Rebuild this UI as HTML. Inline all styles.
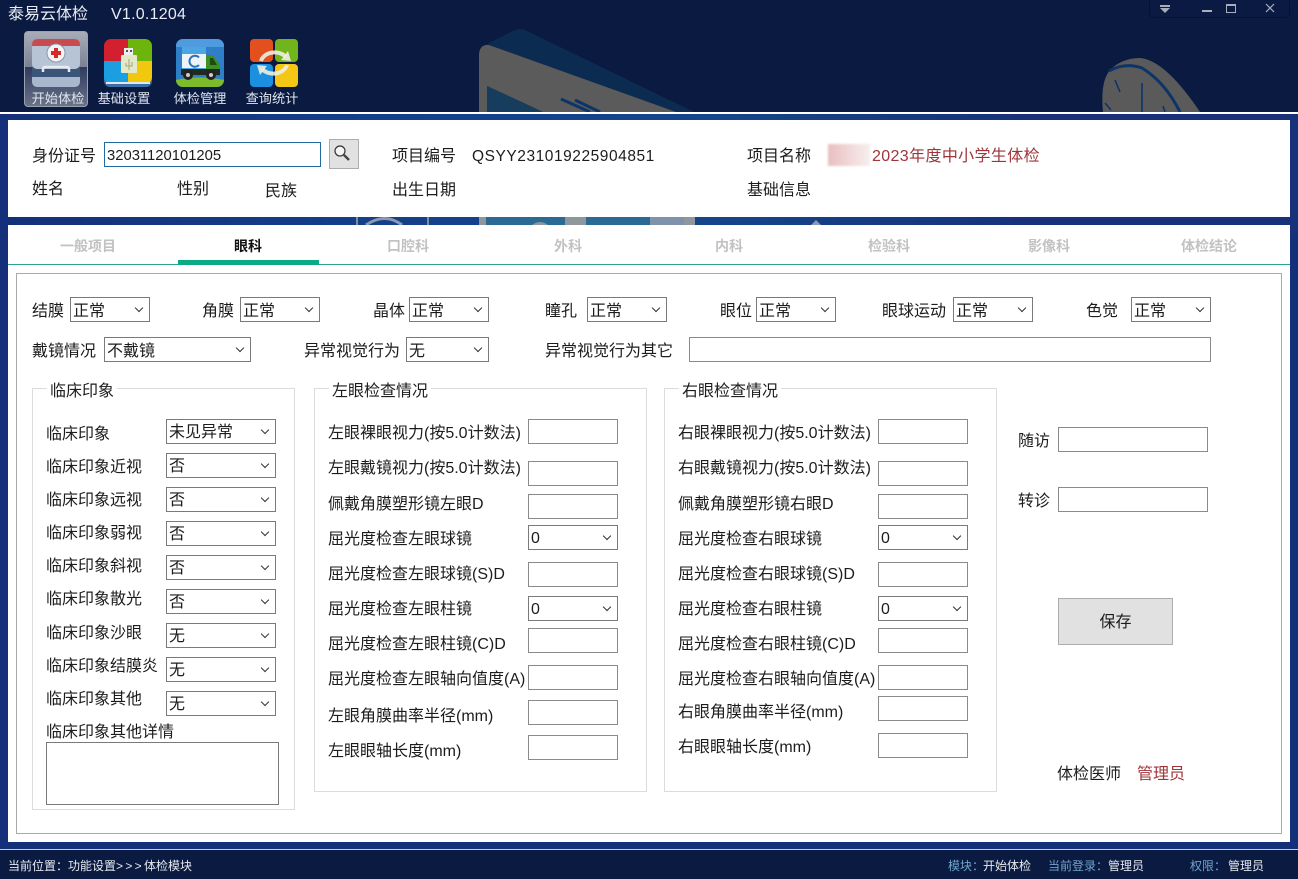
<!DOCTYPE html>
<html lang="zh"><head><meta charset="utf-8"><title>泰易云体检</title>
<style>
html,body{margin:0;padding:0;background:#15307a}
#r{position:relative;width:1298px;height:879px;overflow:hidden;background:#15307a;font-family:"Liberation Sans","Noto Sans CJK SC",sans-serif;font-size:16px;color:#1c1c1c}
#r div,#r svg{position:absolute}
.t{line-height:20px;height:20px;white-space:nowrap;margin-top:2px}
.s,.i{box-sizing:border-box;height:25px;background:#fff;border:1px solid #7a7a7a;line-height:27px;padding-left:2px;white-space:nowrap;color:#1c1c1c}
.i{border-color:#8a8a8a}
.s:after{content:"";position:absolute;right:7px;top:7px;width:5px;height:5px;border-right:1px solid #333;border-bottom:1px solid #333;transform:rotate(45deg)}
.tab{top:236px;width:160px;text-align:center;line-height:20px;font-size:14px;font-weight:bold;color:#c2c2c2}
.fs{box-sizing:border-box;border:1px solid #dcdcdc}
.lg{background:#fff;padding:0 3px;line-height:20px;height:20px;white-space:nowrap;margin-top:1px}
.sb{font-size:12px;line-height:16px;top:858px;white-space:nowrap;color:#e6e9ef}
.bl{color:#6fa4cc}
.tb{font-size:13.2px;color:#dfe5ee;line-height:16px;top:91px;width:72px;text-align:center;white-space:nowrap}
</style></head><body><div id="r">

<div style="left:0;top:0;width:1298px;height:112px;background:#0b1a41"></div>
<svg style="left:0;top:0" width="1298" height="112">
<path d="M487,44L515,30Q521,27 527,31L694,112H676Z" fill="#0b2c50"/>
<path d="M479,112V54Q480,44 489,45L676,112H543L487,86V112Z" fill="#5b5b5b"/>
<polygon points="487,86 543,112 487,112" fill="#163d5e"/>
<path d="M561,99L590,112M575,100L600,112" stroke="#0d3468" stroke-width="3" fill="none"/>
<path d="M1103,112Q1100,82 1110,70Q1122,58 1140,58Q1165,60 1200,112Z" fill="#5a5a5a"/>
<path d="M1109,71Q1125,62 1142,68Q1165,82 1180,112" fill="none" stroke="#0d3468" stroke-width="3"/>
<path d="M1115,80L1120,92M1142,83V112M1105,103L1111,110M1163,106L1165,112" stroke="#0d3468" stroke-width="1.6" fill="none"/>
</svg>
<div style="left:0;top:112px;width:1298px;height:2px;background:#fff"></div>

<div style="left:1149px;top:0;width:141px;height:18px;box-sizing:border-box;background:#0a1a42;border:1px solid #07122f;border-top:0;border-radius:0 0 5px 5px"></div>
<svg style="left:1149px;top:0" width="141" height="18">
<rect x="11" y="5" width="10" height="2" fill="#a8aebb"/><polygon points="11,8 21,8 16,13" fill="#a8aebb"/>
<rect x="53" y="10" width="10" height="2" fill="#a8aebb"/>
<rect x="77.5" y="4.5" width="9" height="8" fill="none" stroke="#a8aebb"/><rect x="77" y="4" width="10" height="2" fill="#a8aebb"/>
<path d="M117,4L125,12M125,4L117,12" stroke="#a8aebb" stroke-width="1.2"/>
</svg>

<div class="t" style="left:8px;top:3px;color:#e9ecf2;font-size:16px">泰易云体检</div>
<div class="t" style="left:111px;top:3px;color:#e9ecf2;font-size:16px;letter-spacing:.25px">V1.0.1204</div>

<div style="left:24px;top:31px;width:64px;height:76px;box-sizing:border-box;border:1px solid #9aa0ad;border-radius:4px;background:linear-gradient(#a8acb8 0,#7c8295 47%,#2f3b5e 47.5%,#6a7288 100%)"></div>
<svg style="left:30px;top:37px" width="52" height="52">
<rect x="2" y="34" width="48" height="16" rx="5" fill="#a9b8cc"/>
<rect x="2" y="30" width="48" height="10" fill="#3a5578"/>
<rect x="2" y="2" width="48" height="30" rx="5" fill="#b7c4d6"/>
<path d="M2,8Q2,2 8,2H44Q50,2 50,8V9H2Z" fill="#c94b50"/>
<circle cx="26" cy="16" r="9" fill="#f3f3f3" stroke="#8c97aa"/>
<path d="M21,14h3v-3h4v3h3v4h-3v3h-4v-3h-3z" fill="#d52a2a"/>
<path d="M13,35v-3q0-2 2-2h22q2 0 2 2v3" fill="none" stroke="#e6ebf2" stroke-width="2.5"/>
</svg>
<svg style="left:104px;top:39px" width="48" height="48">
<clipPath id="c1"><rect x="0" y="0" width="48" height="45" rx="7"/></clipPath>
<rect y="30" width="48" height="18" rx="6" fill="#3b6ea5"/>
<g clip-path="url(#c1)"><rect width="24" height="22" fill="#d3202f"/><rect x="24" width="24" height="22" fill="#6cb50d"/><rect y="22" width="24" height="23" fill="#1c9fe0"/><rect x="24" y="22" width="24" height="23" fill="#f2c80f"/></g>
<rect x="2" y="43" width="44" height="2" fill="#dfe8f2"/>
<rect x="20" y="9" width="9" height="7" fill="#eee"/><rect x="22" y="11" width="2" height="2" fill="#555"/><rect x="26" y="11" width="2" height="2" fill="#555"/>
<rect x="17" y="16" width="16" height="18" rx="1" fill="#e3e8c8"/>
<path d="M25,20V31M22,24v3h6v-4" stroke="#9ca97a" fill="none"/>
</svg>
<svg style="left:176px;top:39px" width="48" height="48">
<clipPath id="c2"><rect width="48" height="48" rx="7"/></clipPath>
<g clip-path="url(#c2)"><rect width="48" height="48" fill="#2f7fc8"/><rect width="48" height="8" fill="#4f9be0"/><path d="M0,41Q24,36 48,41V48H0Z" fill="#7cbb2a"/></g>
<rect x="6" y="8" width="24" height="24" fill="#4da6e4"/><rect x="6" y="15" width="24" height="14" fill="#eef3f8"/>
<path d="M23,18.500a5.500,5.500 0 1 0 0,7.500" fill="none" stroke="#2a74b8" stroke-width="2"/>
<path d="M30,16h7l7,10v11H30Z" fill="#3d8f22"/><path d="M34,19h3l4,7h-7z" fill="#1c4a12"/>
<rect x="5" y="30" width="39" height="6" fill="#1f2a20"/>
<circle cx="12" cy="36" r="5" fill="#222"/><circle cx="12" cy="36" r="2" fill="#ccc"/><circle cx="35" cy="36" r="5" fill="#222"/><circle cx="35" cy="36" r="2" fill="#ccc"/>
</svg>
<svg style="left:250px;top:39px" width="48" height="48">
<rect width="23" height="23" rx="4" fill="#e2501e"/><rect x="25" width="23" height="23" rx="4" fill="#72b41c"/><rect y="25" width="23" height="23" rx="4" fill="#1b8fe0"/><rect x="25" y="25" width="23" height="23" rx="4" fill="#f3c713"/>
<path d="M11,22A14,11 0 0 1 36,18" fill="none" stroke="#f0eedf" stroke-width="4" stroke-opacity=".9"/><polygon points="31,21 41,22 38,12" fill="#f0eedf" fill-opacity=".9"/>
<path d="M37,26A14,11 0 0 1 12,30" fill="none" stroke="#f0eedf" stroke-width="4" stroke-opacity=".9"/><polygon points="17,27 7,26 10,36" fill="#f0eedf" fill-opacity=".9"/>
</svg>
<div class="tb" style="left:22px">开始体检</div>
<div class="tb" style="left:88px">基础设置</div>
<div class="tb" style="left:164px">体检管理</div>
<div class="tb" style="left:236px">查询统计</div>

<svg style="left:0;top:114px" width="1298" height="120">
<defs><linearGradient id="g" x1="0" x2="1"><stop offset="0" stop-color="#15307a"/><stop offset=".3" stop-color="#14408a"/><stop offset=".55" stop-color="#15458a"/><stop offset=".8" stop-color="#17317a"/></linearGradient></defs>
<rect width="1298" height="120" fill="url(#g)"/>
<rect x="356" y="103" width="2" height="8" fill="#7f8da8"/><rect x="427" y="103" width="2" height="8" fill="#7f8da8"/>
<path d="M366,111Q385,98 402,111" fill="none" stroke="#8a9ab0" stroke-width="3"/>
<rect x="479" y="103" width="7" height="8" fill="#8f979e"/><rect x="486" y="103" width="79" height="8" fill="#2a6a95"/><rect x="565" y="103" width="21" height="8" fill="#8f979e"/><rect x="586" y="103" width="64" height="8" fill="#2a6a95"/><rect x="650" y="103" width="34" height="8" fill="#7e93ab"/><rect x="684" y="103" width="11" height="8" fill="#8f979e"/>
<path d="M532,111Q540,105 548,111Z" fill="#8f979e"/>
<polygon points="816,106 811,111 821,111" fill="#8a9ab0"/>
</svg>

<div style="left:8px;top:120px;width:1282px;height:97px;background:#fff"></div>
<div style="left:8px;top:225px;width:1282px;height:617px;background:#fff"></div>

<div class="t" style="left:32px;top:145px">身份证号</div>
<div class="i" style="left:104px;top:142px;width:217px;border-color:#1f6a9e;font-size:14.8px">32031120101205</div>
<div style="left:329px;top:139px;width:30px;height:30px;box-sizing:border-box;background:#e1e1e1;border:1px solid #adadad"></div>
<svg style="left:329px;top:139px" width="30" height="30"><circle cx="11" cy="12" r="5" fill="#f4f4f4" stroke="#333" stroke-width="1.2"/><path d="M15,16L20,21" stroke="#444" stroke-width="2.4"/></svg>
<div class="t" style="left:392px;top:145px">项目编号</div>
<div class="t" style="left:472px;top:145px;font-size:15.5px;letter-spacing:.55px">QSYY231019225904851</div>
<div class="t" style="left:747px;top:145px">项目名称</div>
<div style="left:828px;top:144px;width:42px;height:22px;background:linear-gradient(90deg,#e8bfc0,#f2dcdc 60%,#f7eeee);filter:blur(1px)"></div>
<div class="t" style="left:872px;top:145px;color:#a0343a;letter-spacing:.37px">2023年度中小学生体检</div>
<div class="t" style="left:32px;top:178px">姓名</div>
<div class="t" style="left:177px;top:178px">性别</div>
<div class="t" style="left:265px;top:180px">民族</div>
<div class="t" style="left:392px;top:179px">出生日期</div>
<div class="t" style="left:747px;top:179px">基础信息</div>

<div class="tab" style="left:8px">一般项目</div>
<div class="tab" style="left:168px;color:#111">眼科</div>
<div class="tab" style="left:328px">口腔科</div>
<div class="tab" style="left:488px">外科</div>
<div class="tab" style="left:649px">内科</div>
<div class="tab" style="left:809px">检验科</div>
<div class="tab" style="left:969px">影像科</div>
<div class="tab" style="left:1129px">体检结论</div>
<div style="left:8px;top:264px;width:1282px;height:1px;background:#2aa58c"></div>
<div style="left:178px;top:260px;width:141px;height:5px;background:#0dab85"></div>

<div style="left:16px;top:273px;width:1266px;height:561px;box-sizing:border-box;border:1px solid #aaa"></div>

<div class="t" style="left:32px;top:300px">结膜</div><div class="s" style="left:70px;top:297px;width:80px">正常</div>
<div class="t" style="left:202px;top:300px">角膜</div><div class="s" style="left:240px;top:297px;width:80px">正常</div>
<div class="t" style="left:373px;top:300px">晶体</div><div class="s" style="left:409px;top:297px;width:80px">正常</div>
<div class="t" style="left:545px;top:300px">瞳孔</div><div class="s" style="left:587px;top:297px;width:80px">正常</div>
<div class="t" style="left:720px;top:300px">眼位</div><div class="s" style="left:756px;top:297px;width:80px">正常</div>
<div class="t" style="left:882px;top:300px">眼球运动</div><div class="s" style="left:953px;top:297px;width:80px">正常</div>
<div class="t" style="left:1086px;top:300px">色觉</div><div class="s" style="left:1131px;top:297px;width:80px">正常</div>

<div class="t" style="left:32px;top:340px">戴镜情况</div><div class="s" style="left:104px;top:337px;width:147px">不戴镜</div>
<div class="t" style="left:304px;top:340px">异常视觉行为</div><div class="s" style="left:406px;top:337px;width:83px">无</div>
<div class="t" style="left:545px;top:340px">异常视觉行为其它</div><div class="i" style="left:689px;top:337px;width:522px"></div>

<div class="fs" style="left:32px;top:388px;width:263px;height:422px"></div>
<div class="lg" style="left:47px;top:381px">临床印象</div>
<div class="t" style="left:46px;top:423px">临床印象</div><div class="s" style="left:166px;top:419px;width:110px;line-height:25px">未见异常</div>
<div class="t" style="left:46px;top:456px">临床印象近视</div><div class="s" style="left:166px;top:453px;width:110px;line-height:25px">否</div>
<div class="t" style="left:46px;top:489px">临床印象远视</div><div class="s" style="left:166px;top:487px;width:110px;line-height:25px">否</div>
<div class="t" style="left:46px;top:522px">临床印象弱视</div><div class="s" style="left:166px;top:521px;width:110px;line-height:25px">否</div>
<div class="t" style="left:46px;top:555px">临床印象斜视</div><div class="s" style="left:166px;top:555px;width:110px;line-height:25px">否</div>
<div class="t" style="left:46px;top:588px">临床印象散光</div><div class="s" style="left:166px;top:589px;width:110px;line-height:25px">否</div>
<div class="t" style="left:46px;top:622px">临床印象沙眼</div><div class="s" style="left:166px;top:623px;width:110px;line-height:25px">无</div>
<div class="t" style="left:46px;top:655px">临床印象结膜炎</div><div class="s" style="left:166px;top:657px;width:110px;line-height:25px">无</div>
<div class="t" style="left:46px;top:688px">临床印象其他</div><div class="s" style="left:166px;top:691px;width:110px;line-height:25px">无</div>
<div class="t" style="left:46px;top:721px">临床印象其他详情</div>
<div class="i" style="left:46px;top:742px;width:233px;height:63px;border-color:#7a7a7a"></div>

<div class="fs" style="left:314px;top:388px;width:333px;height:404px"></div>
<div class="lg" style="left:329px;top:381px">左眼检查情况</div>
<div class="t" style="left:328px;top:422px">左眼裸眼视力(按5.0计数法)</div><div class="i" style="left:528px;top:419px;width:90px"></div>
<div class="t" style="left:328px;top:457px">左眼戴镜视力(按5.0计数法)</div><div class="i" style="left:528px;top:461px;width:90px"></div>
<div class="t" style="left:328px;top:493px">佩戴角膜塑形镜左眼D</div><div class="i" style="left:528px;top:494px;width:90px"></div>
<div class="t" style="left:328px;top:528px">屈光度检查左眼球镜</div><div class="s" style="left:528px;top:525px;width:90px;line-height:25px">0</div>
<div class="t" style="left:328px;top:563px">屈光度检查左眼球镜(S)D</div><div class="i" style="left:528px;top:562px;width:90px"></div>
<div class="t" style="left:328px;top:598px">屈光度检查左眼柱镜</div><div class="s" style="left:528px;top:596px;width:90px;line-height:25px">0</div>
<div class="t" style="left:328px;top:633px">屈光度检查左眼柱镜(C)D</div><div class="i" style="left:528px;top:628px;width:90px"></div>
<div class="t" style="left:328px;top:668px">屈光度检查左眼轴向值度(A)</div><div class="i" style="left:528px;top:665px;width:90px"></div>
<div class="t" style="left:328px;top:705px">左眼角膜曲率半径(mm)</div><div class="i" style="left:528px;top:700px;width:90px"></div>
<div class="t" style="left:328px;top:740px">左眼眼轴长度(mm)</div><div class="i" style="left:528px;top:735px;width:90px"></div>

<div class="fs" style="left:664px;top:388px;width:333px;height:404px"></div>
<div class="lg" style="left:679px;top:381px">右眼检查情况</div>
<div class="t" style="left:678px;top:422px">右眼裸眼视力(按5.0计数法)</div><div class="i" style="left:878px;top:419px;width:90px"></div>
<div class="t" style="left:678px;top:457px">右眼戴镜视力(按5.0计数法)</div><div class="i" style="left:878px;top:461px;width:90px"></div>
<div class="t" style="left:678px;top:493px">佩戴角膜塑形镜右眼D</div><div class="i" style="left:878px;top:494px;width:90px"></div>
<div class="t" style="left:678px;top:528px">屈光度检查右眼球镜</div><div class="s" style="left:878px;top:525px;width:90px;line-height:25px">0</div>
<div class="t" style="left:678px;top:563px">屈光度检查右眼球镜(S)D</div><div class="i" style="left:878px;top:562px;width:90px"></div>
<div class="t" style="left:678px;top:598px">屈光度检查右眼柱镜</div><div class="s" style="left:878px;top:596px;width:90px;line-height:25px">0</div>
<div class="t" style="left:678px;top:633px">屈光度检查右眼柱镜(C)D</div><div class="i" style="left:878px;top:628px;width:90px"></div>
<div class="t" style="left:678px;top:668px">屈光度检查右眼轴向值度(A)</div><div class="i" style="left:878px;top:665px;width:90px"></div>
<div class="t" style="left:678px;top:701px">右眼角膜曲率半径(mm)</div><div class="i" style="left:878px;top:696px;width:90px"></div>
<div class="t" style="left:678px;top:736px">右眼眼轴长度(mm)</div><div class="i" style="left:878px;top:733px;width:90px"></div>

<div class="t" style="left:1018px;top:430px">随访</div><div class="i" style="left:1058px;top:427px;width:150px"></div>
<div class="t" style="left:1018px;top:490px">转诊</div><div class="i" style="left:1058px;top:487px;width:150px"></div>
<div style="left:1058px;top:598px;width:115px;height:47px;box-sizing:border-box;background:#e1e1e1;border:1px solid #adadad;text-align:center;line-height:47px">保存</div>
<div class="t" style="left:1057px;top:763px">体检医师</div>
<div class="t" style="left:1137px;top:763px;color:#a0343a">管理员</div>

<div style="left:0;top:849px;width:1298px;height:30px;background:#0b1a41"></div>
<div style="left:0;top:849px;width:1298px;height:1px;background:#c5ccd8"></div>
<div class="sb" style="left:8px">当前位置&#65306;功能设置<span style="letter-spacing:2.3px">&gt;&gt;&gt;</span>体检模块</div>
<div class="sb bl" style="left:948px">模块&#65306;</div><div class="sb" style="left:983px">开始体检</div>
<div class="sb bl" style="left:1048px">当前登录&#65306;</div><div class="sb" style="left:1108px">管理员</div>
<div class="sb bl" style="left:1190px">权限&#65306;</div><div class="sb" style="left:1228px">管理员</div>
</div></body></html>
